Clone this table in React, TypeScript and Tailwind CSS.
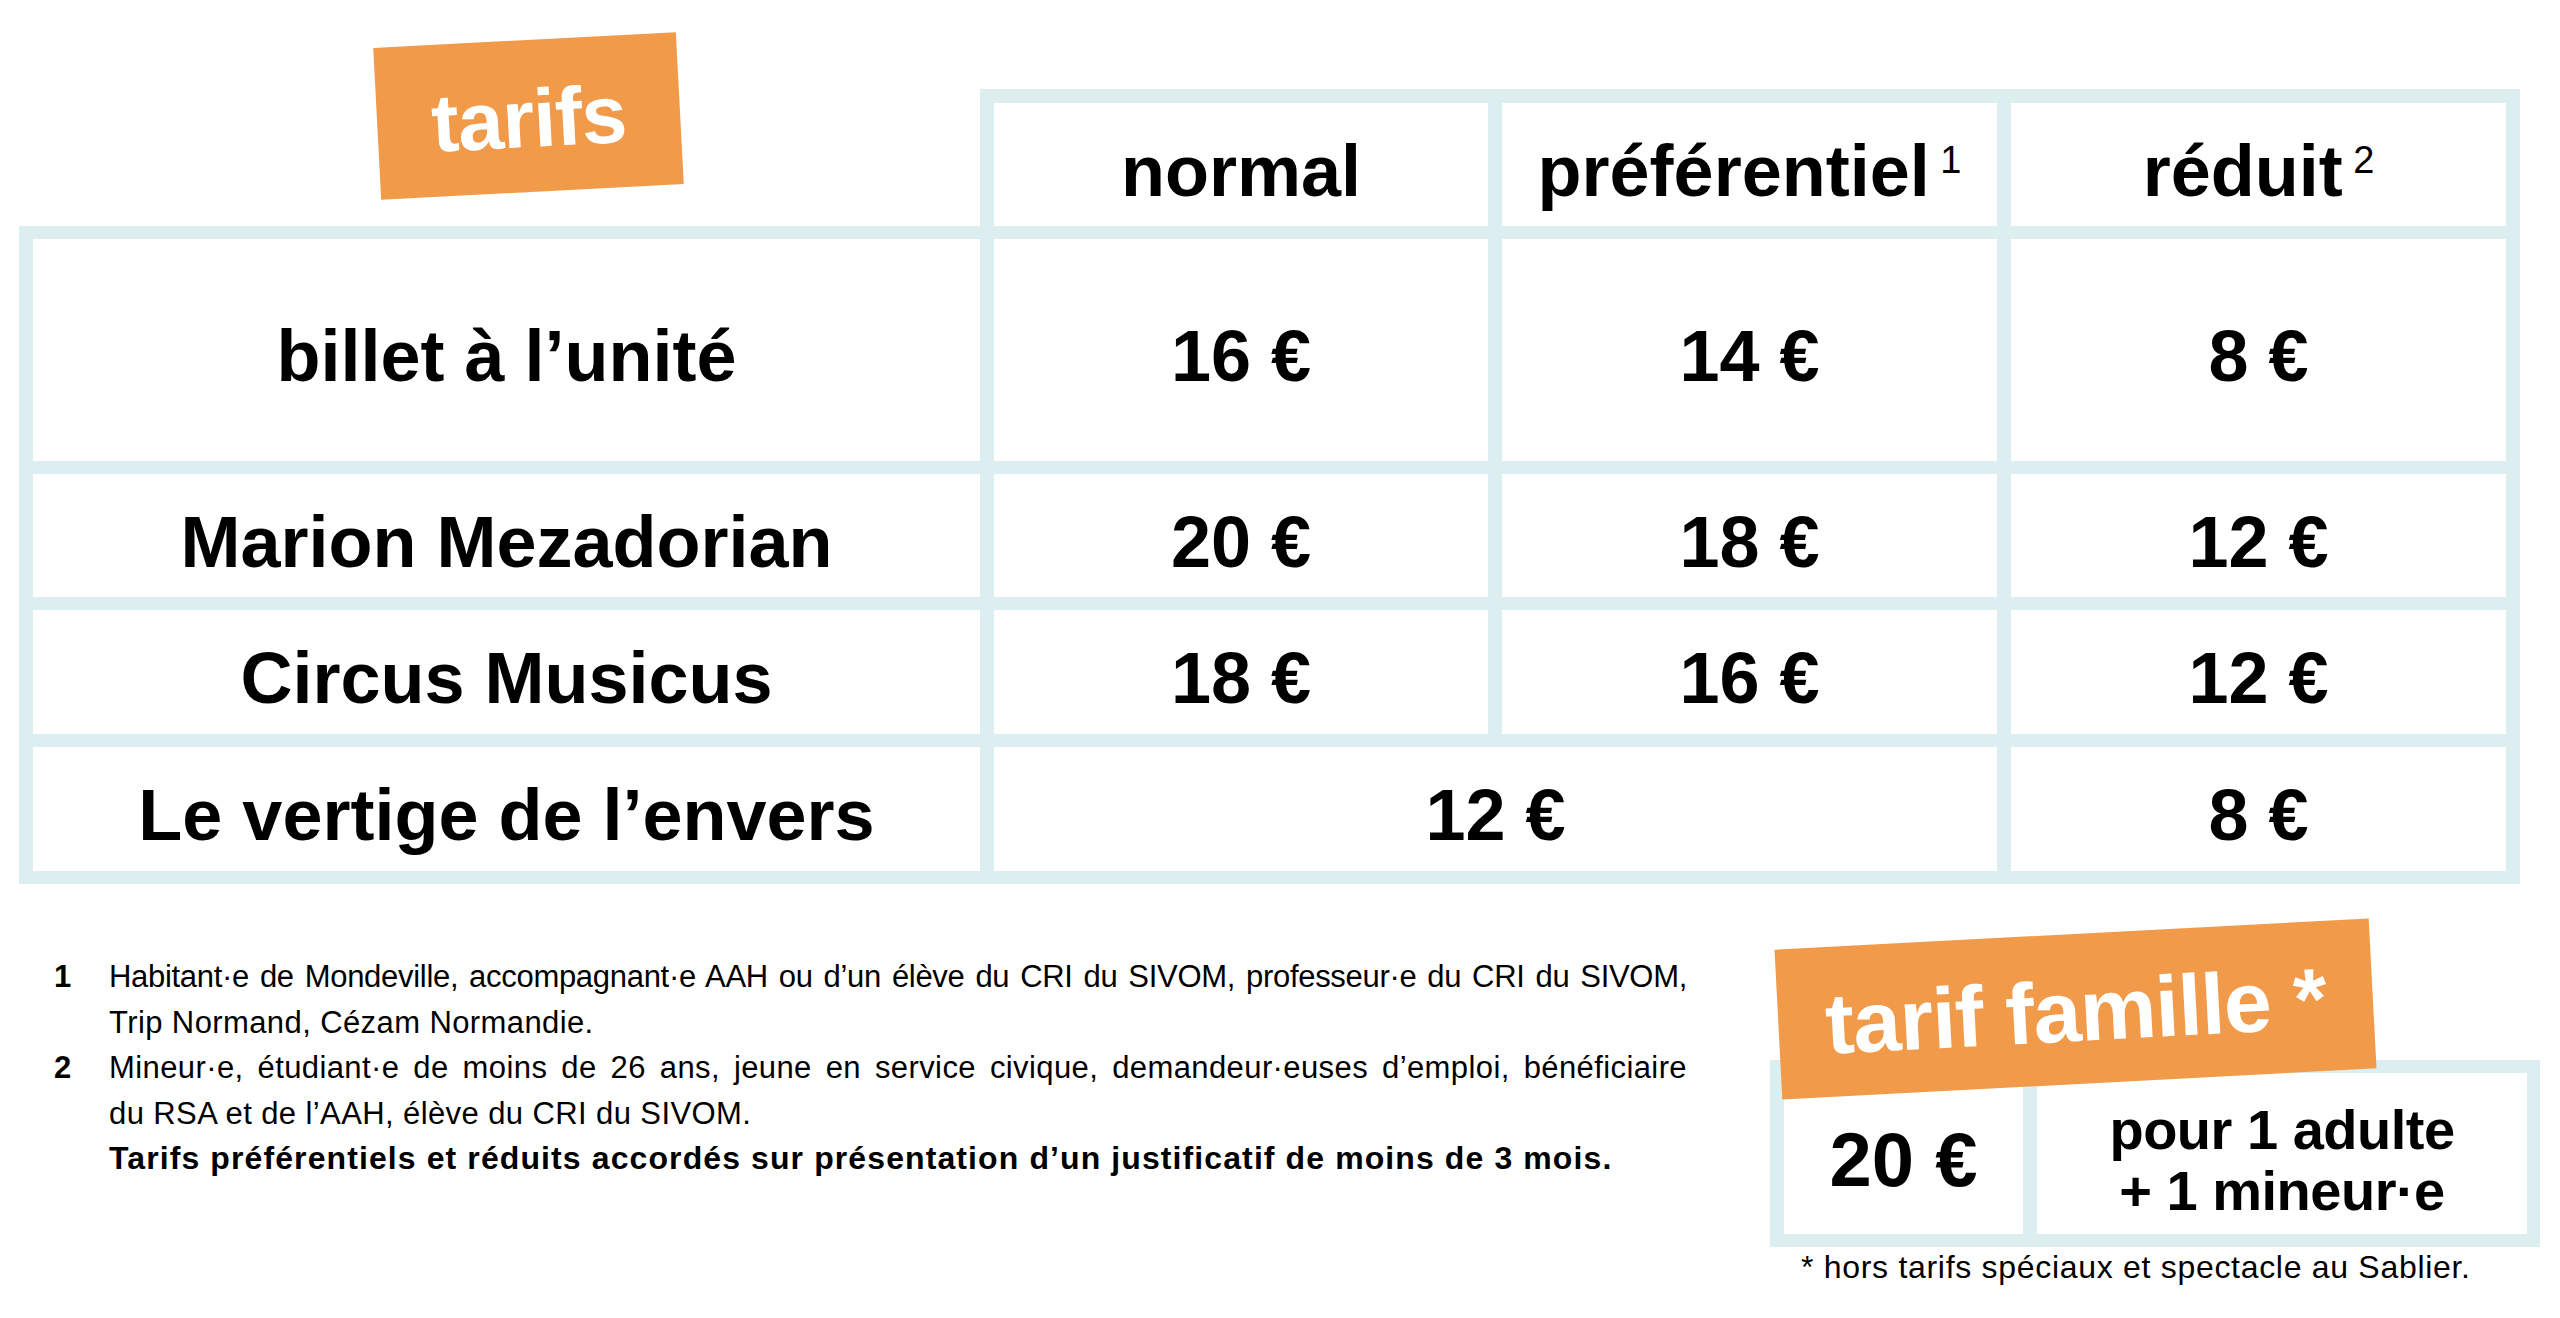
import React from 'react';

const font = { fontFamily: '"Liberation Sans", Arial, sans-serif' };

type Row = { label: string; prices: { value: string; span?: number }[] };

const rows: Row[] = [
  { label: 'billet à l’unité', prices: [{ value: '16 €' }, { value: '14 €' }, { value: '8 €' }] },
  { label: 'Marion Mezadorian', prices: [{ value: '20 €' }, { value: '18 €' }, { value: '12 €' }] },
  { label: 'Circus Musicus', prices: [{ value: '18 €' }, { value: '16 €' }, { value: '12 €' }] },
  { label: 'Le vertige de l’envers', prices: [{ value: '12 €', span: 2 }, { value: '8 €' }] },
];

function Cell({ children, span }: { children: React.ReactNode; span?: number }) {
  return (
    <div
      className={`flex items-center justify-center bg-white pt-[12px] text-[72px] font-bold leading-none text-black whitespace-nowrap ${
        span === 2 ? 'col-span-2' : ''
      }`}
    >
      {children}
    </div>
  );
}

function Sup({ n }: { n: string }) {
  return <span className="text-[38px] font-normal [vertical-align:23px]"> {n}</span>;
}

export default function App() {
  return (
    <div className="relative h-[1318px] w-[2560px] overflow-hidden bg-white text-black" style={font}>
      {/* table */}
      <div className="pl-[19px] pt-[89px]">
        <div className="flex">
          <div className="relative w-[961px]">
            <div className="absolute left-[358px] top-[-49px] flex h-[152px] w-[303px] -rotate-3 items-center justify-center bg-[#f09a4a] pt-[6px]">
              <span className="text-[82px] font-bold leading-none tracking-[-1px] text-white">tarifs</span>
            </div>
          </div>
          <div className="flex gap-[14px] bg-[#dceef0] px-[14px] pt-[14px]">
            <div className="flex h-[123px] w-[494px] items-center justify-center bg-white pt-[12px] text-[72px] font-bold leading-none">
              normal
            </div>
            <div className="flex h-[123px] w-[495px] items-center justify-center bg-white pt-[12px] text-[72px] font-bold leading-none whitespace-nowrap">
              <span>
                préférentiel
                <Sup n="1" />
              </span>
            </div>
            <div className="flex h-[123px] w-[495px] items-center justify-center bg-white pt-[12px] text-[72px] font-bold leading-none whitespace-nowrap">
              <span>
                réduit
                <Sup n="2" />
              </span>
            </div>
          </div>
        </div>

        <div className="grid w-max grid-cols-[947px_494px_495px_495px] grid-rows-[222px_123px_124px_124px] gap-x-[14px] gap-y-[13px] bg-[#dceef0] px-[14px] py-[13px]">
          {rows.map((r) => (
            <React.Fragment key={r.label}>
              <Cell>{r.label}</Cell>
              {r.prices.map((p, i) => (
                <Cell key={i} span={p.span}>
                  {p.value}
                </Cell>
              ))}
            </React.Fragment>
          ))}
        </div>
      </div>

      {/* bottom */}
      <div className="flex items-start">
        <div className="grid grid-cols-[55px_1578px] content-start pl-[54px] pt-[70px] text-[31px] leading-[45.5px]">
          <div className="font-bold">1</div>
          <div>
            <div className="whitespace-nowrap text-justify tracking-[-0.3px] [text-align-last:justify]">
              Habitant·e de Mondeville, accompagnant·e AAH ou d’un élève du CRI du SIVOM, professeur·e du CRI du SIVOM,
            </div>
            <div className="tracking-[0.4px]">Trip Normand, Cézam Normandie.</div>
          </div>
          <div className="font-bold">2</div>
          <div>
            <div className="whitespace-nowrap text-justify tracking-[0.4px] [text-align-last:justify]">
              Mineur·e, étudiant·e de moins de 26 ans, jeune en service civique, demandeur·euses d’emploi, bénéficiaire
            </div>
            <div className="tracking-[0.4px]">du RSA et de l’AAH, élève du CRI du SIVOM.</div>
            <div className="whitespace-nowrap text-[32px] font-bold tracking-[1.1px]">
              Tarifs préférentiels et réduits accordés sur présentation d’un justificatif de moins de 3 mois.
            </div>
          </div>
        </div>

        <div className="relative ml-[83px] pt-[176px]">
          <div className="absolute left-[8px] top-[50px] z-10 flex h-[150px] w-[595px] -rotate-3 items-center justify-center bg-[#f09a4a] pt-[4px]">
            <span className="text-[86px] font-bold leading-none tracking-[-1px] text-white whitespace-nowrap">
              tarif famille *
            </span>
          </div>
          <div className="flex w-[770px] gap-[14px] bg-[#dceef0] py-[13px] pl-[14px] pr-[13px]">
            <div className="flex h-[161px] w-[239px] items-center justify-center bg-white pt-[12px] text-[76px] font-bold leading-none whitespace-nowrap">
              20 €
            </div>
            <div className="flex h-[161px] w-[490px] flex-col items-center justify-center bg-white pt-[12px] text-[56px] font-bold leading-[61px] tracking-[-0.5px]">
              <div>pour 1 adulte</div>
              <div>+ 1 mineur·e</div>
            </div>
          </div>
          <div className="mt-[3px] pl-[31px] text-[32px] leading-[34px] tracking-[0.7px] whitespace-nowrap">
            * hors tarifs spéciaux et spectacle au Sablier.
          </div>
        </div>
      </div>
    </div>
  );
}
